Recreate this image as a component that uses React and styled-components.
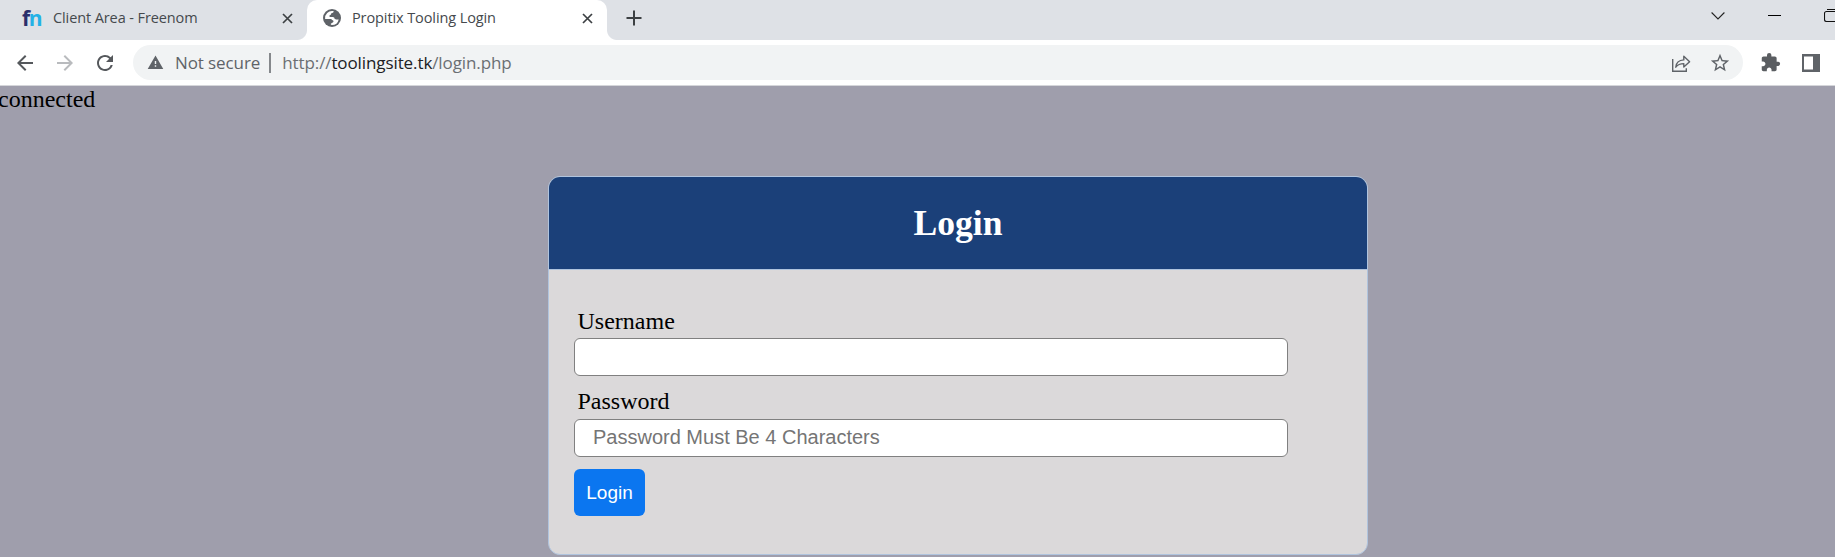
import React from 'react';
import styled, { createGlobalStyle } from 'styled-components';
import { MdArrowBack, MdArrowForward, MdRefresh, MdWarning, MdStarBorder, MdExtension } from 'react-icons/md';

const GlobalStyle = createGlobalStyle`
  * { box-sizing: border-box; }
  body { margin: 0; overflow: hidden; background: #9f9eac; }
`;

const Browser = styled.div`
  width: 1835px;
  height: 557px;
  display: flex;
  flex-direction: column;
  overflow: hidden;
  font-family: 'Open Sans', 'Noto Sans', sans-serif;
`;

const TabStrip = styled.div`
  height: 40px;
  flex: none;
  display: flex;
  background: #dee1e6;
`;

const Tab = styled.div`
  position: relative;
  width: ${(p) => p.$width}px;
  height: 40px;
  display: flex;
  align-items: center;
  padding: 0 14px 4px ${(p) => p.$inset}px;
  background: ${(p) => (p.$active ? '#fff' : 'transparent')};
  border-radius: 10px 10px 0 0;

  &::before, &::after {
    content: '';
    display: ${(p) => (p.$active ? 'block' : 'none')};
    position: absolute;
    bottom: 0;
    width: 10px;
    height: 10px;
  }
  &::before {
    left: -10px;
    background: radial-gradient(circle at 0 0, transparent 9.5px, #fff 10.5px);
  }
  &::after {
    right: -10px;
    background: radial-gradient(circle at 100% 0, transparent 9.5px, #fff 10.5px);
  }
`;

const TabTitle = styled.span`
  flex: 1;
  margin-left: 11px;
  font-size: 14.5px;
  letter-spacing: -0.1px;
  line-height: 20px;
  color: #45494d;
  white-space: nowrap;
`;

const FreenomMark = styled.span`
  width: 20px;
  font: 700 21px/20px 'Open Sans', sans-serif;
  letter-spacing: -1.4px;
  color: #2b2e6b;
  white-space: nowrap;
  span { color: #23b1e6; }
`;

const NewTab = styled.div`
  width: 54px;
  display: flex;
  align-items: center;
  justify-content: center;
  padding-bottom: 4px;
`;

const WindowControls = styled.div`
  margin-left: auto;
  display: flex;
  align-items: flex-start;
  gap: 43px;
  padding-top: 8px;
`;

const Toolbar = styled.div`
  height: 46px;
  flex: none;
  display: flex;
  align-items: center;
  padding: 0 15px 0 13px;
  background: #fff;
  border-bottom: 1px solid #d5d6da;
`;

const NavButton = styled.div`
  width: 24px;
  height: 24px;
  margin-right: 16px;
  color: ${(p) => (p.$disabled ? '#b9bbbe' : '#55585c')};
  svg { display: block; }
`;

const AddressBar = styled.div`
  width: 1610px;
  height: 35px;
  display: flex;
  align-items: center;
  padding: 0 12px 0 14px;
  border-radius: 18px;
  background: #f1f3f4;
  color: #5f6368;
  font-size: 17px;
  white-space: nowrap;
`;

const Security = styled.span`
  margin-left: 11px;
  letter-spacing: -0.1px;
`;

const Divider = styled.span`
  width: 2px;
  height: 20px;
  margin: 0 11px 0 9px;
  background: #85888c;
`;

const Url = styled.span`
  flex: 1;
  letter-spacing: -0.1px;
  color: #6b6f73;
  b { font-weight: 400; color: #202124; }
`;

const BarActions = styled.div`
  display: flex;
  align-items: center;
  gap: 18px;
`;

const Extensions = styled.div`
  margin-left: auto;
  display: flex;
  align-items: center;
  gap: 21px;
  color: #5a5d61;
`;

const Page = styled.main`
  flex: 1;
  background: #9f9eac;
  color: #000;
  font-family: 'Liberation Serif', 'Times New Roman', serif;
  font-size: 24px;
  line-height: 27px;
`;

const Status = styled.div`
  margin-left: -2px;
`;

const Card = styled.section`
  width: 820px;
  height: 379px;
  margin: 63px 0 0 548px;
  border: 1px solid #b0c4de;
  border-radius: 12px;
  background: #dbd9da;
  overflow: hidden;
`;

const CardHeader = styled.h2`
  height: 93px;
  margin: 0;
  border-bottom: 1px solid #b0c4de;
  background: #1b4079;
  color: #fff;
  text-align: center;
  font-size: 35.6px;
  line-height: 93px;
`;

const Form = styled.form`
  padding: 38px 0 0 25px;
`;

const Field = styled.div`
  height: 80px;
  label { display: block; margin: 0 0 ${(p) => p.$labelGap}px 3.5px; }
`;

const Input = styled.input`
  display: block;
  width: 714px;
  height: 38px;
  padding: 0 18px 2px;
  border: 1px solid #808080;
  border-radius: 6px;
  background: #fff;
  font: 20px 'Liberation Sans', Arial, sans-serif;
  &::placeholder { color: #757575; opacity: 1; }
`;

const Submit = styled.button`
  display: block;
  width: 71px;
  height: 47px;
  margin-top: 1px;
  padding: 0;
  border: 0;
  border-radius: 6px;
  background: #0b76f0;
  color: #fff;
  font: 19px 'Liberation Sans', Arial, sans-serif;
`;

const CloseIcon = () => (
  <svg width="11" height="11" viewBox="0 0 12 12" stroke="#3c4043" strokeWidth="1.9">
    <path d="M1.1 1.1l9.8 9.8M10.9 1.1l-9.8 9.8" />
  </svg>
);

const GlobeIcon = () => (
  <svg width="18" height="18" viewBox="0 0 18 18">
    <circle cx="9" cy="9" r="9" fill="#5f6368" />
    <path d="M10.2 2.1c1 .4.5 1.3-.4 1.7-.9.4-1.8.5-1.8 1.4 0 .9-1.7.7-1.7 1.7 0 1.1 1 1 2 1 1.3 0 3.1-.1 3.1 1.2 0 1.2 1.2 1.5 2.3 1.4l2-.1a7 7 0 0 1-6.9 5.5c-.8 0-1.2-.5-1-1.2l2.3-1.5c.7-.6.3-1.7-.4-1.9-.9-.3-.9-1.4-1.9-1.4H2.1A7 7 0 0 1 10.2 2.1z" fill="#fff" />
  </svg>
);

const ShareIcon = () => (
  <svg width="20" height="20" viewBox="0 0 20 20" fill="none" stroke="#5f6368" strokeWidth="1.4">
    <path d="M1.7 6v12.2h13.6v-3" />
    <path d="M4.8 14.2c.4-5 3.4-7.1 8-7.3V3.2l5.8 5.5-5.8 5.4v-3.5c-3.8 0-6.1 1-8 3.6z" strokeLinejoin="round" />
  </svg>
);

export default function App() {
  return (
    <Browser>
      <GlobalStyle />
      <TabStrip>
        <Tab $width={307} $inset={22}>
          <FreenomMark>f<span>n</span></FreenomMark>
          <TabTitle>Client Area - Freenom</TabTitle>
          <CloseIcon />
        </Tab>
        <Tab $active $width={300} $inset={16}>
          <GlobeIcon />
          <TabTitle>Propitix Tooling Login</TabTitle>
          <CloseIcon />
        </Tab>
        <NewTab>
          <svg width="16" height="16" viewBox="0 0 16 16" stroke="#3c4043" strokeWidth="2">
            <path d="M8 .5v15M.5 8h15" />
          </svg>
        </NewTab>
        <WindowControls>
          <svg width="14" height="16" viewBox="0 0 14 16" fill="none" stroke="#222" strokeWidth="1.1">
            <path d="M.6 4.5l6.4 6.4 6.4-6.4" />
          </svg>
          <svg width="13" height="16" viewBox="0 0 13 16">
            <rect y="7" width="13" height="1" fill="#000" />
          </svg>
          <svg width="11" height="16" viewBox="0 0 11 16" fill="none" stroke="#111" strokeWidth="1.1">
            <path d="M11 3.5H2.5a2 2 0 0 0-2 2v6a2 2 0 0 0 2 2H11M3 1.5h8" />
          </svg>
        </WindowControls>
      </TabStrip>
      <Toolbar>
        <NavButton><MdArrowBack size={24} /></NavButton>
        <NavButton $disabled><MdArrowForward size={24} /></NavButton>
        <NavButton><MdRefresh size={24} /></NavButton>
        <AddressBar>
          <MdWarning size={17} />
          <Security>Not secure</Security>
          <Divider />
          <Url>http://<b>toolingsite.tk</b>/login.php</Url>
          <BarActions>
            <ShareIcon />
            <MdStarBorder size={22} />
          </BarActions>
        </AddressBar>
        <Extensions>
          <MdExtension size={21} />
          <svg width="18" height="18" viewBox="0 0 18 18">
            <rect width="18" height="18" fill="#5f6368" />
            <rect x="2" y="2.5" width="9" height="13" fill="#fff" />
          </svg>
        </Extensions>
      </Toolbar>
      <Page>
        <Status>connected</Status>
        <Card>
          <CardHeader>Login</CardHeader>
          <Form>
            <Field $labelGap={3}>
              <label htmlFor="username">Username</label>
              <Input id="username" type="text" />
            </Field>
            <Field $labelGap={4}>
              <label htmlFor="password">Password</label>
              <Input id="password" type="password" placeholder="Password Must Be 4 Characters" />
            </Field>
            <Submit type="button">Login</Submit>
          </Form>
        </Card>
      </Page>
    </Browser>
  );
}
